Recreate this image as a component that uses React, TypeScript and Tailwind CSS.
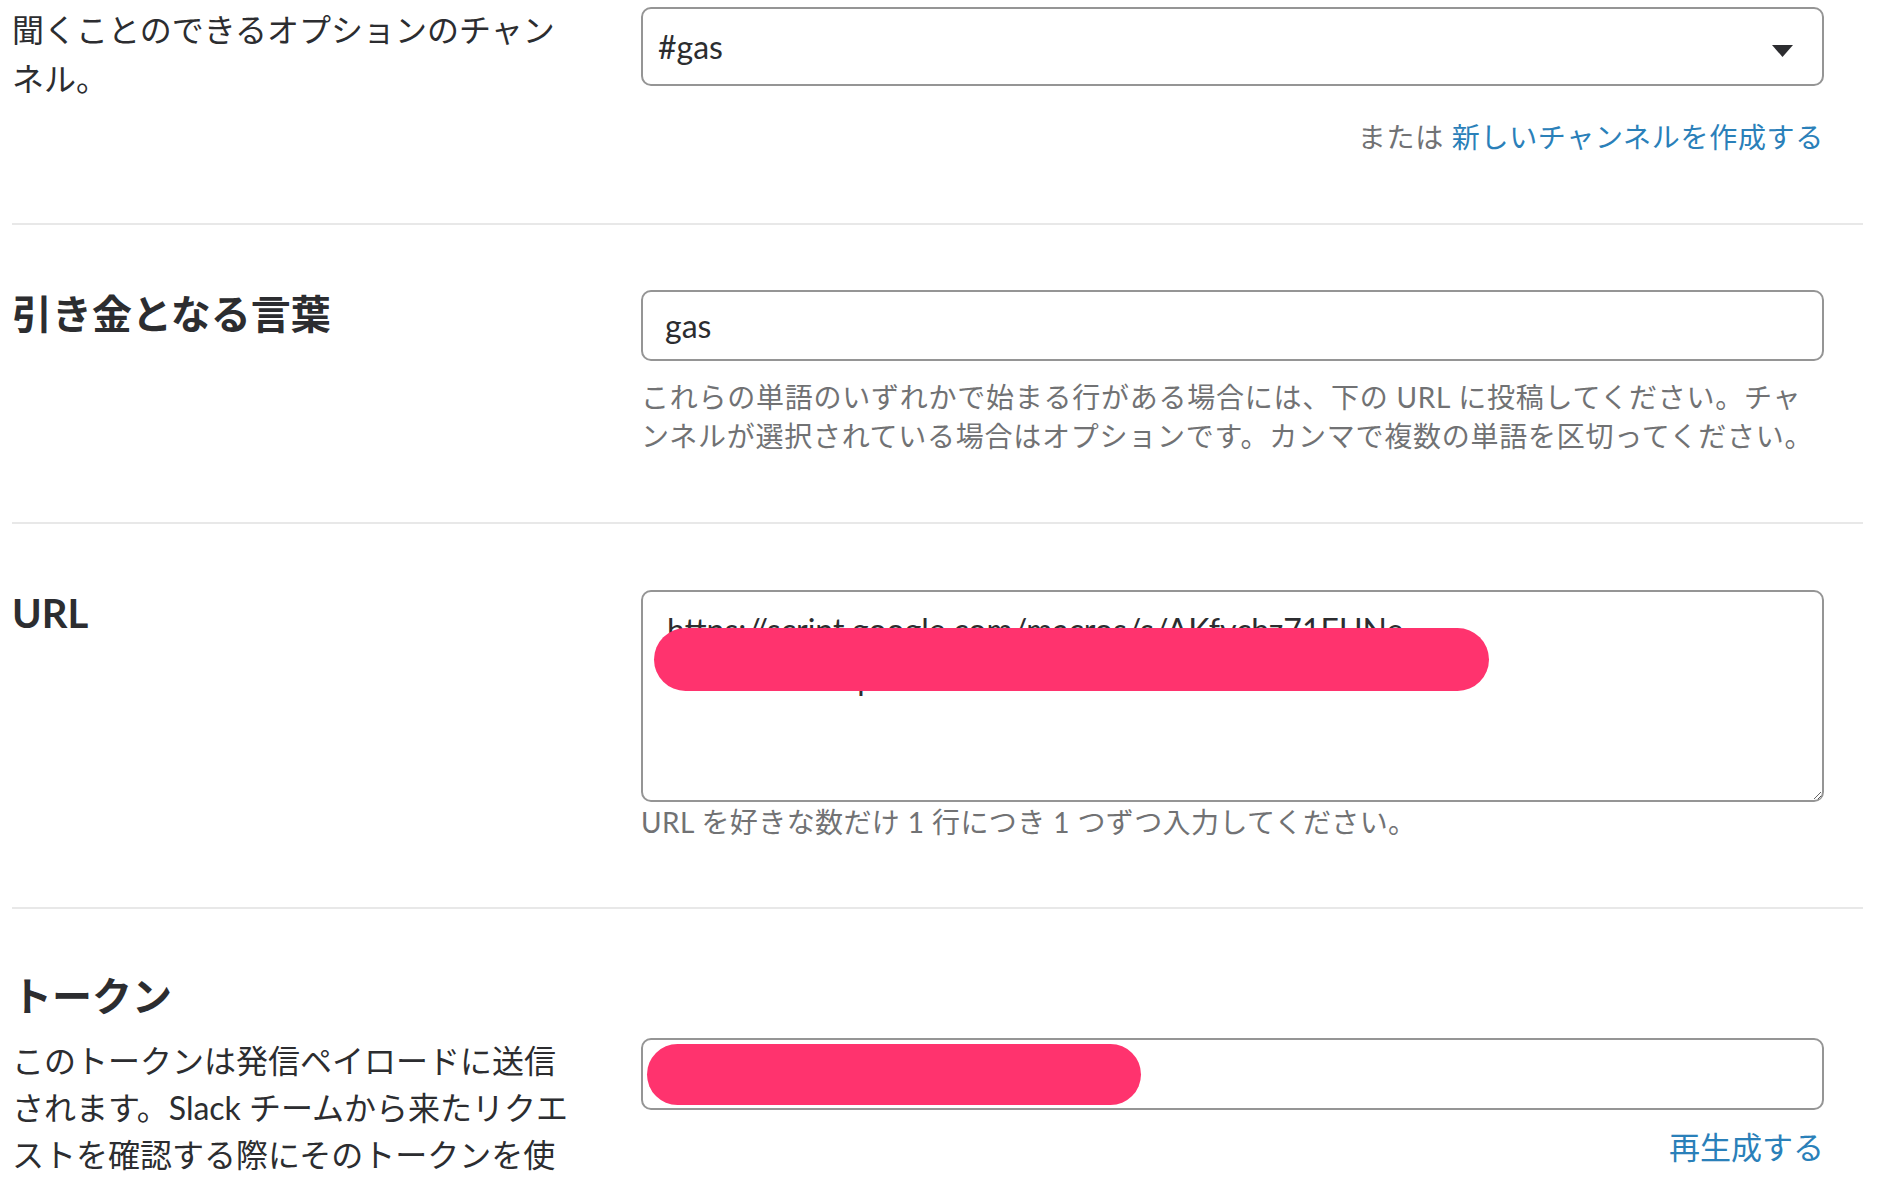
import React from "react";

const font = "font-['Lato','Noto_Sans_CJK_JP',sans-serif]";

function Section({
  children,
  className = "",
}: {
  children: React.ReactNode;
  className?: string;
}) {
  return (
    <section className={`flex border-b-2 border-[#e8e8e8] pr-[39px] ${className}`}>
      {children}
    </section>
  );
}

export default function App() {
  return (
    <div className={`h-[1178px] overflow-hidden bg-white pl-[12px] pr-[15px] text-[#2c2d30] ${font}`}>
      {/* channel */}
      <Section className="pt-[5px] pb-[66px]">
        <div className="w-[629px] shrink-0 pr-[60px] text-[32px] leading-[49px]">
          聞くことのできるオプションのチャンネル。
        </div>
        <div className="flex-1 pt-[2px]">
          <div className="relative">
            <select
              defaultValue="gas"
              className="h-[79px] w-full appearance-none rounded-[10px] border-2 border-[#959595] bg-white pl-[15px] text-[32px] text-[#2c2d30] outline-none"
            >
              <option value="gas">#gas</option>
            </select>
            <svg
              className="pointer-events-none absolute right-[31px] top-[38px]"
              width="21"
              height="12"
              viewBox="0 0 21 12"
            >
              <path d="M0 0 H21 L10.5 12 Z" fill="#2c2d30" />
            </svg>
          </div>
          <p className="mt-[31px] text-right text-[28px] leading-[40px] tracking-[0.7px] text-[#717274]">
            または <a className="text-[#2a80b9]">新しいチャンネルを作成する</a>
          </p>
        </div>
      </Section>

      {/* trigger words */}
      <Section className="pt-[64px] pb-[66px]">
        <div className="w-[629px] shrink-0 pr-[60px]">
          <h2 className="text-[40px] font-bold leading-[50px]">引き金となる言葉</h2>
        </div>
        <div className="flex-1 pt-[1px]">
          <input
            defaultValue="gas"
            className="h-[71px] w-full rounded-[10px] border-2 border-[#959595] px-[22px] text-[32px] text-[#2c2d30] outline-none"
          />
          <p className="mt-[17px] text-[28px] leading-[39px] tracking-[0.75px] text-[#717274]">
            これらの単語のいずれかで始まる行がある場合には、下の URL に投稿してください。チャ
            <br />
            ンネルが選択されている場合はオプションです。カンマで複数の単語を区切ってください。
          </p>
        </div>
      </Section>

      {/* URL */}
      <Section className="pt-[64px] pb-[65px]">
        <div className="w-[629px] shrink-0 pr-[60px]">
          <h2 className="text-[40px] font-bold leading-[50px]">URL</h2>
        </div>
        <div className="flex-1 pt-[2px]">
          <div className="relative">
            <textarea
              defaultValue={"https://script.google.com/macros/s/AKfycbz71EUNe\n----------------p---------------------"}
              className="block h-[212px] w-full resize-y rounded-[10px] border-2 border-[#959595] px-[24px] pt-[14px] text-[32px] leading-[48px] text-[#2c2d30] outline-none"
            />
            <div className="absolute left-[13px] top-[38px] h-[63px] w-[835px] rounded-full bg-[#ff336e]" />
          </div>
          <p className="mt-[1px] text-[28px] leading-[39px] tracking-[0.4px] text-[#717274]">
            URL を好きな数だけ 1 行につき 1 つずつ入力してください。
          </p>
        </div>
      </Section>

      {/* token */}
      <Section className="pt-[62px] pb-[60px]">
        <div className="w-[629px] shrink-0 pr-[60px]">
          <h2 className="text-[40px] font-bold leading-[50px]">トークン</h2>
          <p className="mt-[16px] text-[32px] leading-[47px]">
            このトークンは発信ペイロードに送信されます。Slack チームから来たリクエストを確認する際にそのトークンを使用してください。
          </p>
        </div>
        <div className="flex-1 pt-[67px]">
          <div className="relative">
            <input
              defaultValue="xxxxxxxxxxxxxxxxxxxxxxxx"
              className="h-[72px] w-full rounded-[10px] border-2 border-[#959595] px-[22px] text-[32px] text-[#2c2d30] outline-none"
            />
            <div className="absolute left-[6px] top-[6px] h-[61px] w-[494px] rounded-full bg-[#ff336e]" />
          </div>
          <p className="mt-[17px] text-right text-[31px] leading-[40px]">
            <a className="text-[#2a80b9]">再生成する</a>
          </p>
        </div>
      </Section>
    </div>
  );
}
